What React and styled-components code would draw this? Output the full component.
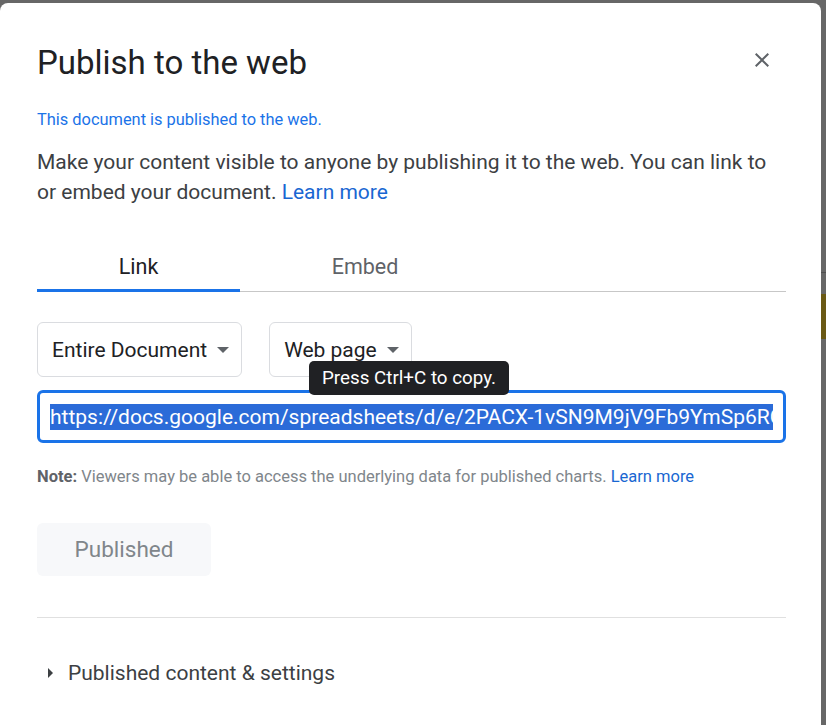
import styled, { createGlobalStyle } from 'styled-components';

const GlobalStyle = createGlobalStyle`
  html, body {
    margin: 0;
    padding: 0;
    background: #676767;
  }
  body {
    font-family: Roboto, 'Liberation Sans', Arial, sans-serif;
    overflow: hidden;
  }
  * { box-sizing: border-box; }
`;

const Screen = styled.div`
  display: flex;
  height: 725px;
  padding-top: 3px;
  overflow: hidden;
`;

const Dialog = styled.div`
  flex-shrink: 0;
  width: 821px;
  min-height: 760px;
  padding: 40px 35px 0 37px;
  background: #fff;
  border-radius: 8px;
  color: #202124;
`;

const Header = styled.div`
  display: flex;
  justify-content: space-between;
  align-items: flex-start;
`;

const Title = styled.h1`
  margin: 0;
  font-size: 33px;
  font-weight: 400;
  line-height: 40px;
  color: #202124;
`;

const CloseButton = styled.button`
  width: 48px;
  height: 48px;
  margin-top: -7px;
  padding: 0;
  border: none;
  background: transparent;
  display: flex;
  align-items: center;
  justify-content: center;
  color: #5f6368;
  cursor: pointer;
`;

const Status = styled.p`
  margin: 26px 0 0;
  font-size: 16.4px;
  line-height: 20px;
  color: #1a73e8;
`;

const Intro = styled.p`
  margin: 17px 0 0;
  font-size: 21px;
  line-height: 30px;
  color: #3c4043;
`;

const TextLink = styled.a`
  color: #1967d2;
  text-decoration: none;
`;

const Tabs = styled.div`
  display: flex;
  margin-top: 37px;
  border-bottom: 1px solid #c7c7c7;
`;

const Tab = styled.button`
  width: ${({ $width }) => $width}px;
  height: 48px;
  margin-bottom: -1px;
  padding: 0;
  border: none;
  border-bottom: 3px solid ${({ $active }) => ($active ? '#1a73e8' : 'transparent')};
  background: transparent;
  font-family: inherit;
  font-size: 21.5px;
  color: ${({ $active }) => ($active ? '#202124' : '#5f6368')};
`;

const Controls = styled.div`
  position: relative;
  margin-top: 30px;
`;

const DropdownRow = styled.div`
  display: flex;
  gap: 27px;
`;

const Dropdown = styled.button`
  height: 55px;
  padding: 0 12px 0 14px;
  display: flex;
  align-items: center;
  gap: 10px;
  border: 1px solid #dadce0;
  border-radius: 6px;
  background: #fff;
  font-family: inherit;
  font-size: 21px;
  color: #202124;
`;

const Caret = styled.span`
  width: 0;
  height: 0;
  border-left: 6px solid transparent;
  border-right: 6px solid transparent;
  border-top: 6px solid #5f6368;
`;

const Tooltip = styled.div`
  position: absolute;
  left: 272px;
  top: 39px;
  z-index: 2;
  height: 34px;
  padding: 0 13px;
  border-radius: 5px;
  background: #202124;
  color: #fff;
  font-size: 18.8px;
  line-height: 34px;
  white-space: nowrap;
`;

const UrlBox = styled.div`
  margin-top: 13px;
  height: 53px;
  padding: 0 10px;
  display: flex;
  align-items: center;
  border: 3px solid #1a73e8;
  border-radius: 6px;
`;

const UrlTrack = styled.div`
  flex: 1;
  overflow: hidden;
  white-space: nowrap;
`;

const Selected = styled.span`
  background: #2b6bd8;
  color: #fff;
  font-size: 21px;
  line-height: 26px;
  display: inline-block;
`;

const Note = styled.p`
  margin: 24px 0 0;
  font-size: 16.5px;
  line-height: 20px;
  color: #80868b;

  strong {
    color: #5f6368;
    font-weight: 700;
  }
`;

const PublishedButton = styled.button`
  display: block;
  margin-top: 36px;
  width: 174px;
  height: 53px;
  padding-bottom: 3px;
  border: none;
  border-radius: 6px;
  background: #f7f8fa;
  font-family: inherit;
  font-size: 22.5px;
  color: #80868b;
`;

const Divider = styled.hr`
  margin: 41px 0 0;
  border: none;
  height: 1px;
  background: #e0e0e0;
`;

const Expander = styled.div`
  margin-top: 40px;
  padding-left: 11px;
  display: flex;
  align-items: center;
  gap: 15px;
  font-size: 21px;
  line-height: 30px;
  color: #3c4043;
`;

const SideCaret = styled.span`
  width: 0;
  height: 0;
  border-top: 5px solid transparent;
  border-bottom: 5px solid transparent;
  border-left: 5px solid #3c4043;
`;

const SideStrip = styled.div`
  flex: 1;
  display: flex;
  flex-direction: column;
`;

const StripRule = styled.div`
  margin-top: 269px;
  height: 1px;
  background: #4f4f4f;
`;

const StripCell = styled.div`
  margin-top: 21px;
  height: 45px;
  background: #6a5914;
`;

function CloseIcon() {
  return (
    <svg width='24' height='24' viewBox='0 0 24 24' fill='currentColor'>
      <path d='M19 6.41L17.59 5 12 10.59 6.41 5 5 6.41 10.59 12 5 17.59 6.41 19 12 13.41 17.59 19 19 17.59 13.41 12z' />
    </svg>
  );
}

export default function App() {
  const url =
    'https://docs.google.com/spreadsheets/d/e/2PACX-1vSN9M9jV9Fb9YmSp6RC4bqTnL0xw/pubhtml';

  return (
    <>
      <GlobalStyle />
      <Screen>
        <Dialog>
          <Header>
            <Title>Publish to the web</Title>
            <CloseButton aria-label='Close'>
              <CloseIcon />
            </CloseButton>
          </Header>

          <Status>This document is published to the web.</Status>
          <Intro>
            Make your content visible to anyone by publishing it to the web. You can link to
            or embed your document. <TextLink href='#'>Learn more</TextLink>
          </Intro>

          <Tabs>
            <Tab $width={203} $active>
              Link
            </Tab>
            <Tab $width={250}>Embed</Tab>
          </Tabs>

          <Controls>
            <DropdownRow>
              <Dropdown>
                Entire Document <Caret />
              </Dropdown>
              <Dropdown>
                Web page <Caret />
              </Dropdown>
            </DropdownRow>
            <Tooltip>Press Ctrl+C to copy.</Tooltip>
            <UrlBox>
              <UrlTrack>
                <Selected>{url}</Selected>
              </UrlTrack>
            </UrlBox>
          </Controls>

          <Note>
            <strong>Note:</strong> Viewers may be able to access the underlying data for
            published charts. <TextLink href='#'>Learn more</TextLink>
          </Note>

          <PublishedButton>Published</PublishedButton>
          <Divider />
          <Expander>
            <SideCaret />
            Published content &amp; settings
          </Expander>
        </Dialog>
        <SideStrip>
          <StripRule />
          <StripCell />
        </SideStrip>
      </Screen>
    </>
  );
}
